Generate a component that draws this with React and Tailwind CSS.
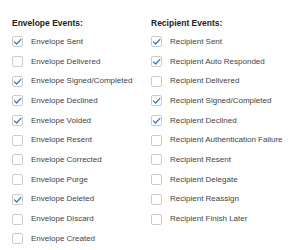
const envelope = [
  ['Envelope Sent', true],
  ['Envelope Delivered', false],
  ['Envelope Signed/Completed', true],
  ['Envelope Declined', true],
  ['Envelope Voided', true],
  ['Envelope Resent', false],
  ['Envelope Corrected', false],
  ['Envelope Purge', false],
  ['Envelope Deleted', true],
  ['Envelope Discard', false],
  ['Envelope Created', false],
];

const recipient = [
  ['Recipient Sent', true],
  ['Recipient Auto Responded', true],
  ['Recipient Delivered', false],
  ['Recipient Signed/Completed', true],
  ['Recipient Declined', true],
  ['Recipient Authentication Failure', false],
  ['Recipient Resent', false],
  ['Recipient Delegate', false],
  ['Recipient Reassign', false],
  ['Recipient Finish Later', false],
];

function Box({ checked }) {
  return (
    <span className="w-[11px] h-[11px] shrink-0 rounded-[2px] border border-[#cccccc] bg-white flex items-center justify-center">
      {checked && (
        <svg width="9" height="9" viewBox="0 0 10 10" fill="none">
          <path d="M1.5 5.4 L4 7.8 L8.8 2.6" stroke="#2f6fd6" strokeWidth="1.3" strokeLinecap="round" strokeLinejoin="round" />
        </svg>
      )}
    </span>
  );
}

function Column({ title, items }) {
  return (
    <div className="flex flex-col">
      <div className="text-[8.5px] font-bold text-[#222] h-[12px] leading-[12px] mb-[3px]">{title}</div>
      {items.map(([label, checked]) => (
        <div key={label} className="flex items-center gap-[8px] h-[19.7px]">
          <Box checked={checked} />
          <span className="text-[8px] text-[#444] whitespace-nowrap">{label}</span>
        </div>
      ))}
    </div>
  );
}

export default function App() {
  return (
    <div className="w-[294px] h-[250px] bg-white flex pl-[12px] pt-[17px]" style={{ fontFamily: '"Liberation Sans", Arial, sans-serif' }}>
      <div className="w-[139px]">
        <Column title="Envelope Events:" items={envelope} />
      </div>
      <Column title="Recipient Events:" items={recipient} />
    </div>
  );
}
